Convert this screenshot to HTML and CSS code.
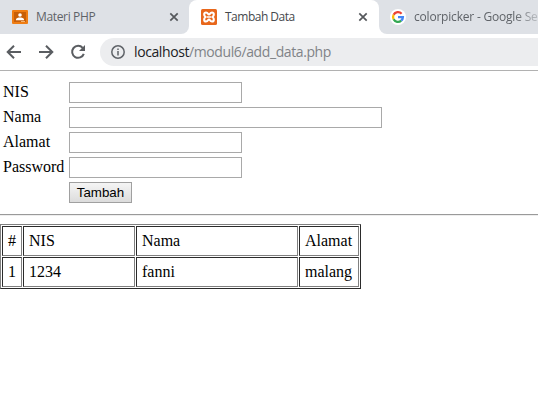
FILE: index.html
```html
<!DOCTYPE html>
<html lang="id">
<head>
<meta charset="utf-8">
<title>Tambah Data</title>
<link rel="stylesheet" href="styles.css">
</head>
<body>
<header>
  <div class="tabs">
    <div class="tab tab-first">
      <svg class="fav" width="16" height="16" viewBox="0 0 16 16"><rect y="1" width="16" height="14" rx="1" fill="#ef7d13"/><rect x="2" y="3" width="12" height="10" fill="#c75f09"/><circle cx="8" cy="6" r="1.8" fill="#fff"/><path d="M4 11.3V10.500C4 9 6.500 8.500 8 8.500s4 .5 4 2v.8z" fill="#fff"/><path d="M9 12h4v1H9z" fill="#f5b36f"/></svg>
      <span class="title t1">Materi PHP</span>
      <svg class="close" width="10" height="10" viewBox="0 0 10 10"><path d="M1.300 1.300l7.400 7.400M8.700 1.300L1.300 8.700"/></svg>
    </div>
    <div class="tab tab-active">
      <svg class="fav" width="16" height="16" viewBox="0 0 16 16"><rect width="16" height="16" rx="1.500" fill="#e8671b"/><path d="M5 3.500C2.800 3.500 2.500 6.500 4.500 8 2.500 9.500 2.800 12.500 5 12.500S6.800 10.500 8 10.500s.8 2 3 2 2.500-3 .5-4.500c2-1.500 1.700-4.500-.5-4.500S9.200 5.500 8 5.500s-.8-2-3-2z" fill="none" stroke="#fff" stroke-width="2.100"/><path d="M6 8h4" stroke="#fff" stroke-width="1.500"/></svg>
      <span class="title t2">Tambah Data</span>
      <svg class="close" width="10" height="10" viewBox="0 0 10 10"><path d="M1.300 1.300l7.400 7.400M8.700 1.300L1.300 8.700"/></svg>
    </div>
    <div class="tab tab-last">
      <svg class="fav" width="16" height="16" viewBox="0 0 16 16"><circle cx="8" cy="8" r="8" fill="#fff"/><g fill="none" stroke-width="2.300"><path d="M3.600 5.800A4.900 4.900 0 0 1 11.600 4.700" stroke="#ea4335"/><path d="M3.600 5.800a4.900 4.900 0 0 0 0 4.500" stroke="#fbbc05"/><path d="M3.600 10.300a4.900 4.900 0 0 0 7.600 1.400" stroke="#34a853"/><path d="M11.200 11.700A4.900 4.900 0 0 0 12.900 8.100H8" stroke="#4285f4"/></g></svg>
      <span class="title t3">colorpicker - Google Se</span>
    </div>
  </div>
  <div class="toolbar">
    <svg class="nav" width="16" height="16" viewBox="0 0 16 16"><path d="M15 8H2M8 1.700L1.700 8 8 14.300"/></svg>
    <svg class="nav" width="16" height="16" viewBox="0 0 16 16"><path d="M1 8h13M8 1.700L14.300 8 8 14.300"/></svg>
    <svg class="nav" width="16" height="16" viewBox="0 0 16 16"><path d="M12.700 3.900A6 6 0 1 0 13.800 9.800"/><path class="solid" d="M15 1v6H9z"/></svg>
    <div class="address">
      <svg class="info" width="14" height="14" viewBox="0 0 14 14"><circle cx="7" cy="7" r="6.200"/><path d="M7 6v4.500M7 3.400V5"/></svg>
      <span class="url"><b>localhost</b>/modul6/add_data.php</span>
    </div>
  </div>
</header>
<main>
  <form>
    <table class="fields">
      <tr><td class="label">NIS</td><td><input type="text"></td></tr>
      <tr><td>Nama</td><td><input class="wide" type="text"></td></tr>
      <tr><td>Alamat</td><td><input type="text"></td></tr>
      <tr><td>Password</td><td><input type="password"></td></tr>
      <tr><td></td><td><button type="button">Tambah</button></td></tr>
    </table>
  </form>
  <hr>
  <table class="data">
    <tr><td class="c1">#</td><td class="c2">NIS</td><td class="c3">Nama</td><td class="c4">Alamat</td></tr>
    <tr><td>1</td><td>1234</td><td>fanni</td><td>malang</td></tr>
  </table>
</main>
</body>
</html>
```
FILE: styles.css
```css
* { box-sizing: border-box; }
body {
  margin: 0;
  height: 408px;
  overflow: hidden;
  background: #fff;
  color: #000;
  font: 16px/18px "Liberation Serif", serif;
}
svg { display: block; flex: none; }
header { font-family: "Open Sans", "Noto Sans", sans-serif; }
/* The lower half is white so the rounded tab corners blend into the toolbar. */
.tabs { display: flex; height: 34px; background: linear-gradient(#dee1e6 0 17px, #fff 17px); }
.tab {
  display: flex;
  align-items: center;
  height: 34px;
  background: #dee1e6;
  color: #5f6368;
  font-size: 12px;
}
.tab-first { width: 189px; padding-left: 12px; border-bottom-right-radius: 8px; }
.tab-active {
  width: 190px;
  padding-left: 12px;
  background: #fff;
  color: #45484c;
  border-radius: 8px 8px 0 0;
}
.tab-last { flex: 1; min-width: 0; padding-left: 11px; border-bottom-left-radius: 8px; }
.title { margin-left: 8px; white-space: nowrap; line-height: 18px; }
.t1 { letter-spacing: -0.35px; }
.t2 { letter-spacing: -0.5px; }
.t3 {
  letter-spacing: -0.2px;
  -webkit-mask-image: linear-gradient(to right, #000 100px, transparent 132px);
  mask-image: linear-gradient(to right, #000 100px, transparent 132px);
}
.close { margin-left: auto; margin-right: 10px; fill: none; stroke: #55585c; stroke-width: 1.7; }
.tab-active .close { margin-right: 11px; }
.toolbar {
  display: flex;
  align-items: center;
  height: 37px;
  padding: 0 0 1px 6px;
  border-bottom: 1px solid #b1b1b1;
}
.nav { margin-right: 16px; fill: none; stroke: #5a5d61; stroke-width: 2; }
.solid { fill: #5a5d61; stroke: none; }
.address {
  display: flex;
  align-items: center;
  flex: 1;
  height: 28px;
  margin-top: 1px;
  margin-left: -2px;
  padding-left: 11px;
  border-radius: 14px 0 0 14px;
  background: #ecedef;
}
.info { fill: none; stroke: #5f6368; stroke-width: 1.5; }
.url { margin-left: 9px; color: #808387; font-size: 14px; letter-spacing: -0.4px; white-space: nowrap; }
.url b { color: #202124; font-weight: 400; }
main { padding-top: 8px; }
.fields { border-spacing: 2px; }
.fields td { padding: 1px; }
.fields td:first-child { padding-bottom: 3px; }
.fields .label { width: 64px; }
input {
  display: block;
  width: 173px;
  height: 21px;
  margin: 0;
  padding: 1px;
  border: 1px solid #a9a9a9;
  border-radius: 0;
  background: #fff;
}
.wide { width: 313px; }
button {
  display: block;
  width: 63px;
  height: 21px;
  padding: 0;
  border: 1px solid #a0a0a0;
  border-radius: 0;
  background: linear-gradient(#f5f5f5, #dcdcdc);
  color: #000;
  font: 13.333px/18px "Liberation Sans", sans-serif;
}
hr { height: 2px; margin: 8px 0; border: 0; border-top: 1px solid #9a9a9a; border-bottom: 1px solid #eee; }
.data {
  width: 361px;
  table-layout: fixed;
  border-spacing: 1px;
  border: 1px solid;
  border-color: #808080 #2b2b2b #2b2b2b #808080;
}
.data td { height: 30px; padding: 5px; border: 1px solid; border-color: #2b2b2b #808080 #808080 #2b2b2b; }
.c1 { width: 20px; }
.c2 { width: 112px; }
.c3 { width: 162px; }
.c4 { width: 60px; }
```
